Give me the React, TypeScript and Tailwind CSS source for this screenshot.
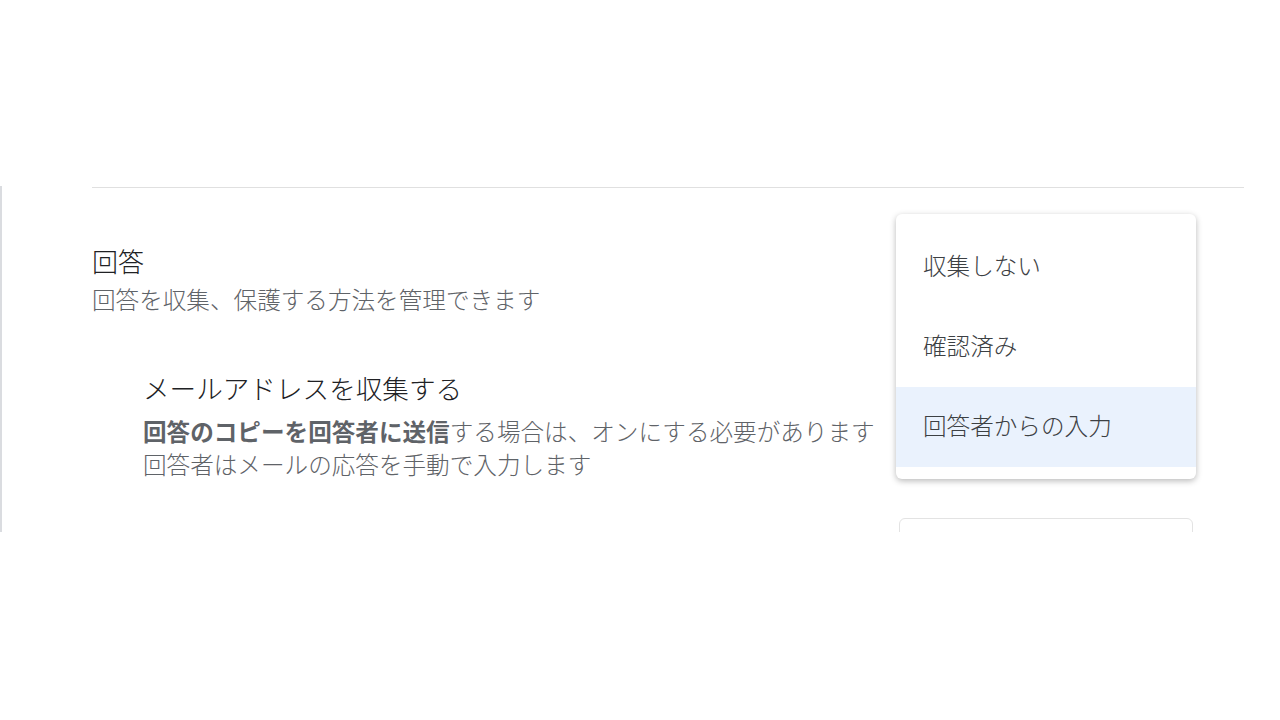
import React from "react";

const font = { fontFamily: '"Noto Sans CJK JP", "Noto Sans", sans-serif' };

export default function App() {
  return (
    <div className="w-[1280px] h-[720px] bg-white overflow-hidden font-light" style={font}>
      <div className="h-[186px]" />
      <div className="h-[346px] border-l-2 border-[#dadce0] overflow-hidden">
        <div className="pl-[90px] pr-[36px] pt-[1px]">
          <div className="border-t border-[#e0e0e0]" />
          <div className="flex relative">
            <div className="flex-1">
              <div className="mt-[55px] text-[26px] leading-[36px] text-[#202124]">回答</div>
              <div className="mt-[3px] text-[23.6px] leading-[34px] text-[#5f6368]">
                回答を収集、保護する方法を管理できます
              </div>
              <div className="ml-[51px]">
                <div className="mt-[53px] text-[26.6px] leading-[38px] text-[#202124]">
                  メールアドレスを収集する
                </div>
                <div className="mt-[8px] text-[23.6px] leading-[33px] text-[#5f6368]">
                  <span className="font-bold text-[#5f6368]">回答のコピーを回答者に送信</span>
                  する場合は、オンにする必要があります
                </div>
                <div className="text-[23.6px] leading-[33px] text-[#5f6368]">
                  回答者はメールの応答を手動で入力します
                </div>
              </div>
            </div>
            <div className="w-[294px] mr-[51px] relative">
              <div className="pt-[199px]">
                <div className="h-[80px] border border-[#dadce0] rounded-[6px]" />
                <div className="mt-[51px] h-[56px] border border-[#e3e3e3] rounded-[6px]" />
              </div>
              <div className="absolute top-[26px] -left-[3px] w-[300px] bg-white rounded-[6px] shadow-[0_2px_6px_rgba(0,0,0,0.28)] pt-[13px] pb-[12px] z-10">
                <div className="h-[80px] flex items-center pb-[3px] pl-[27px] text-[23.6px] text-[#3c4043]">収集しない</div>
                <div className="h-[80px] flex items-center pb-[3px] pl-[27px] text-[23.6px] text-[#3c4043]">確認済み</div>
                <div className="h-[80px] flex items-center pb-[3px] pl-[27px] text-[23.6px] text-[#3c4043] bg-[#eaf2fd]">回答者からの入力</div>
              </div>
            </div>
          </div>
        </div>
      </div>
    </div>
  );
}
